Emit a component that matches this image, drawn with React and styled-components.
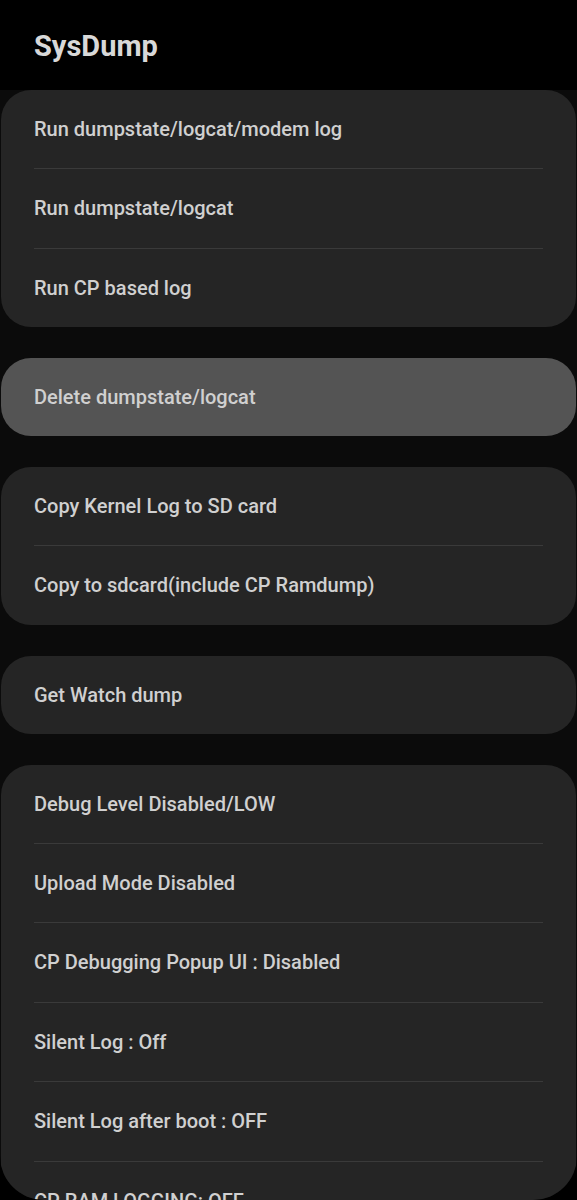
import styled, { createGlobalStyle } from 'styled-components';

const Global = createGlobalStyle`
    html, body {
        margin: 0;
        padding: 0;
        background: #000;
    }
    body {
        font-family: Roboto, "Noto Sans", sans-serif;
    }
`

const Screen = styled.div`
    height: 1200px;
    overflow: hidden;
    background: #0b0b0b;
    border-radius: 0 0 44px 44px;
`

const Header = styled.header`
    height: 90px;
    background: #000;
    display: flex;
    align-items: center;
    padding: 0 34px;
    box-sizing: border-box;
`

const Title = styled.h1`
    margin: 2px 0 0;
    font-size: 29px;
    font-weight: 700;
    color: #d8d8d8;
`

const List = styled.div`
    display: flex;
    flex-direction: column;
    gap: 31px;
    padding: 0 1px;
`

const Card = styled.div`
    background: ${p => (p.$active ? '#545454' : '#252525')};
    border-radius: 30px;
    overflow: hidden;
`

const Row = styled.div`
    height: 78px;
    display: flex;
    align-items: center;
    padding: 0 33px;
    font-size: 20px;
    font-weight: 500;
    color: #d0d0d0;

    & + & {
        height: 78.5px;
        border-top: 1px solid #3a3a3a;
        margin: 0 33px;
        padding: 0;
    }
`

const groups = [
    ['Run dumpstate/logcat/modem log', 'Run dumpstate/logcat', 'Run CP based log'],
    ['Delete dumpstate/logcat'],
    ['Copy Kernel Log to SD card', 'Copy to sdcard(include CP Ramdump)'],
    ['Get Watch dump'],
    [
        'Debug Level Disabled/LOW',
        'Upload Mode Disabled',
        'CP Debugging Popup UI : Disabled',
        'Silent Log : Off',
        'Silent Log after boot : OFF',
        'CP RAM LOGGING: OFF',
        'Enable DTMF',
    ],
]

const App = () => {
    return (
        <>
            <Global />
            <Screen>
                <Header>
                    <Title>SysDump</Title>
                </Header>
                <List>
                    {groups.map((items, i) => (
                        <Card key={i} $active={i === 1}>
                            {items.map(label => (
                                <Row key={label}>{label}</Row>
                            ))}
                        </Card>
                    ))}
                </List>
            </Screen>
        </>
    )
}

export default App;
